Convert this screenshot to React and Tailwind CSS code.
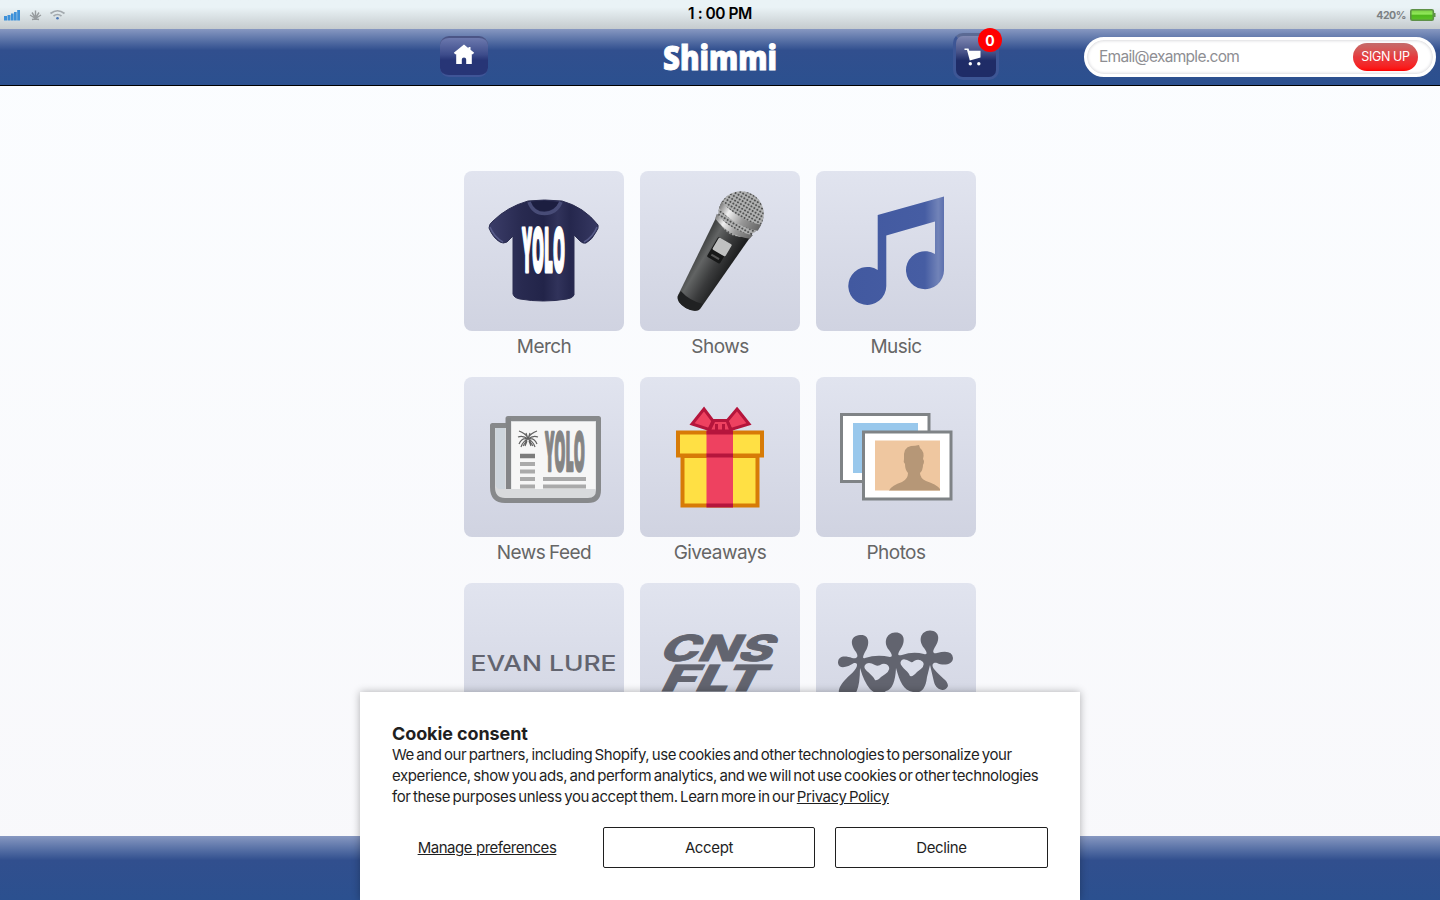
import React from "react";

const Shirt = () => (
  <svg viewBox="0 0 160 160" className="size-full">
    <defs>
      <linearGradient id="cloth" x1="0" x2="1">
        <stop offset="0" stopColor="#3b3d69" />
        <stop offset="0.3" stopColor="#282a50" />
        <stop offset="0.5" stopColor="#222449" />
        <stop offset="0.63" stopColor="#31335b" />
        <stop offset="0.74" stopColor="#25274d" />
        <stop offset="1" stopColor="#363862" />
      </linearGradient>
    </defs>
    <path
      d="M64 30Q80 28 98 30Q120 36 134 54Q135 57 132 61Q128 69 122 72Q119 73 116 70L110 64L110 124Q109 127 103 128Q79 132 56 128Q50 127 49 123L49 65L43 71Q39 73 36 71Q29 67 25 57Q25 53 29 50Q43 36 64 30Z"
      fill="url(#cloth)"
      stroke="#2b2d50"
      strokeWidth="1"
    />
    <path d="M26 56Q30 66 39 71M133 56Q129 66 120 71" stroke="#575b88" strokeWidth="1.6" fill="none" />
    <path d="M67 31Q81 29 95 31Q91 40 80 40Q71 40 67 31Z" fill="#1c1e40" />
    <path d="M65 31Q69 42.500 80.500 42.500Q92 42.500 97 31" stroke="#484c77" strokeWidth="3.500" fill="none" />
    <g transform="translate(58 100.500) scale(1 2.800)">
      <text
        textLength="43"
        lengthAdjust="spacingAndGlyphs"
        fontSize="22"
        className="fill-white stroke-white font-['Open_Sans'] font-extrabold [vector-effect:non-scaling-stroke]"
        strokeWidth="2.200"
        strokeLinejoin="round"
      >
        YOLO
      </text>
    </g>
  </svg>
);

const Mic = () => (
  <svg viewBox="0 0 160 160" className="size-full">
    <defs>
      <linearGradient id="handle" x1="0" x2="1">
        <stop offset="0" stopColor="#3a3c3c" />
        <stop offset="0.25" stopColor="#626464" />
        <stop offset="0.6" stopColor="#3a3b3c" />
        <stop offset="1" stopColor="#191a1b" />
      </linearGradient>
      <linearGradient id="chrome" x1="0" x2="1">
        <stop offset="0" stopColor="#777" />
        <stop offset="0.25" stopColor="#f0f0f0" />
        <stop offset="0.6" stopColor="#999" />
        <stop offset="1" stopColor="#666" />
      </linearGradient>
      <pattern id="mesh" width="3.4" height="3.4" patternUnits="userSpaceOnUse">
        <rect width="3.4" height="3.4" fill="#b4b5b5" />
        <circle cx="1.7" cy="1.7" r="1.1" fill="#515252" />
      </pattern>
    </defs>
    <g transform="translate(101 43) rotate(30.500)">
      <path d="M-20 12L20 12L13 102Q12 108 0 109Q-12 108 -13 102Z" fill="url(#handle)" />
      <path d="M-12.800 97Q0 101 12.800 97L12.500 104Q8 109 0 109Q-11 109 -12.800 103Z" fill="#202122" />
      <circle r="22.800" fill="url(#mesh)" />
      <path d="M-23 -1Q0 7 23 -1L23 6Q0 14 -22 6Z" fill="url(#chrome)" />
      <path d="M-21 12Q0 20 21 12L20 17Q0 25 -20 17Z" fill="url(#chrome)" />
      <rect x="-8" y="31" width="15" height="23" rx="1.500" fill="#171818" />
      <rect x="-7" y="31" width="15" height="14" rx="1.500" fill="#c0c1c1" />
      <path d="M-5 50H4" stroke="#555" strokeWidth="2" />
    </g>
  </svg>
);

const Note = () => (
  <svg viewBox="0 0 160 160" className="size-full">
    <defs>
      <linearGradient id="note" x1="0" x2="1">
        <stop offset="0" stopColor="#4259a0" />
        <stop offset="0.8" stopColor="#465da3" />
        <stop offset="0.94" stopColor="#7183b8" />
        <stop offset="1" stopColor="#5d70ae" />
      </linearGradient>
    </defs>
    <path
      d="M61.700 44L128 25.500V99A19 19 0 1 1 119 83V50.500L70.300 64.500V115A19 19 0 1 1 61.700 99Z"
      fill="url(#note)"
    />
  </svg>
);

const Newspaper = () => (
  <svg viewBox="0 0 160 160" className="size-full">
    <path
      d="M44 41.500H134.500V113Q134.500 123.500 124 123.500H41Q28.500 123.500 28.500 110V48.500H44Z"
      fill="#d8dadc"
      stroke="#87898b"
      strokeWidth="5"
      strokeLinejoin="round"
    />
    <path d="M31.500 51H41V112H36Q31.500 112 31.500 106Z" fill="#cdd5dc" />
    <path d="M44.500 41V112" stroke="#838587" strokeWidth="5" />
    <rect x="47.500" y="45" width="84" height="67" fill="#f6f6f6" />
    <path
      d="M64 61Q61 56 55 54M64 62Q59 58 54 60M64 62Q58 60 55 67M64 62Q59 64 57 70M64 61Q67 56 73 54M64 62Q69 58 74 60M64 62Q70 60 73 67M64 62Q69 64 71 70M64 62L62 56M64 62L66 56M63 63L59 69M65 63L69 69M63 64L61 69M65 64L67 69"
      fill="none"
      stroke="#606060"
      strokeWidth="1.200"
    />
    <path d="M56 79H71" stroke="#7b7b7b" strokeWidth="4.500" />
    <path
      d="M56 87H71M56 94.500H71M56 102H71M56 109.500H71M79 102H122M79 109.500H122"
      stroke="#aaaaaa"
      strokeWidth="3.800"
    />
    <g transform="translate(81 93.500) scale(1 2.480)">
      <text
        textLength="40"
        lengthAdjust="spacingAndGlyphs"
        fontSize="22"
        fill="#858585"
        stroke="#858585"
        strokeWidth="1.800"
        strokeLinejoin="round"
        className="font-['Open_Sans'] font-extrabold [vector-effect:non-scaling-stroke]"
      >
        YOLO
      </text>
    </g>
  </svg>
);

const Gift = () => (
  <svg viewBox="0 0 160 160" className="size-full">
    <g fill="#ffe044" stroke="#d77b07" strokeWidth="4">
      <path d="M42.500 79H117.500V128.500H42.500Z" />
      <path d="M38 55.500H122V78.500H38Z" />
    </g>
    <path d="M66.500 54H93V130H66.500Z" fill="#ee4160" />
    <path d="M66.500 55.500H93M66.500 78.500H93M66.500 128.500H93" stroke="#b5153c" strokeWidth="4" />
    <g fill="#ee4160" stroke="#b5153c" strokeWidth="3" strokeLinejoin="miter">
      <path d="M64 32L52 47L69 52.500L73 44Z" />
      <path d="M97 32L109 47L91 52.500L87 44Z" />
      <path d="M74 43.500H87L91 54H69Z" />
      <path d="M76.500 47V54M83.500 47V54" />
    </g>
  </svg>
);

const Pictures = () => (
  <svg viewBox="0 0 160 160" className="size-full">
    <g fill="#fff" stroke="#7f8386" strokeWidth="3">
      <path d="M25.500 37.500H113V104.500H25.500Z" />
      <path d="M37 46H102V96H37Z" fill="#99c8ec" stroke="none" />
      <path d="M47.500 55H135V122H47.500Z" />
    </g>
    <path d="M59 63.500H124V113.500H59Z" fill="#efc7a0" />
    <path
      d="M73 113.500Q76 108 86 105Q92 102 92 96Q89 93 89 87Q87 85 88 82Q87 70 95 69Q99 69 103 68L104 71Q109 75 107 82Q109 84 107 88Q107 93 104 96Q104 101 110 104Q120 107 124 112V113.500Z"
      fill="#b69777"
    />
  </svg>
);

const EvanLure = () => (
  <svg viewBox="0 0 160 160" className="size-full">
    <text
      x="6.500"
      y="88"
      textLength="146"
      lengthAdjust="spacingAndGlyphs"
      fontSize="21.500"
      fill="#62646f"
      className="font-['Inter'] font-medium"
    >
      EVAN LURE
    </text>
  </svg>
);

const CnsFlt = () => (
  <svg viewBox="0 0 160 160" className="size-full">
    <g
      fill="#62646f"
      stroke="#62646f"
      strokeWidth="0.800"
      fontSize="36"
      className="font-['Inter'] font-extrabold"
    >
      <text transform="translate(17.500 77.500) skewX(-27)" textLength="112" lengthAdjust="spacingAndGlyphs">
        CNS
      </text>
      <text transform="translate(19 108) skewX(-27)" textLength="102" lengthAdjust="spacingAndGlyphs">
        FLT
      </text>
    </g>
  </svg>
);

const People = () => (
  <svg viewBox="0 0 160 160" className="size-full">
    <g fill="#62646f">
      <path d="M44 52C54 51 54 62 49 69C47 73 46 76 49 75Q61 71 74 74C77 74 76 71 73 67C67 60 70 50 79 49.500C89 49 90 59 84 67C81 72 82 73 86 72Q97 68 108 71C112 72 111 69 108 65C102 58 104 48 114 47.500C124 48 124 57 119 64C116 69 117 71 121 70Q136 66 137 75C137 82 127 83 121 80C117 79 115 82 118 86C125 95 132 97 132 103C129 110 120 107 118 99L114 82L111 94Q109 112 97 109C87 107 84 99 80 85Q79 106 70 108Q63 115 54 106Q48 99 44 85Q44 118 29 116C18 111 23 102 34 92C42 85 43 79 38 80C32 84 23 87 22 80C22 72 30 73 36 75C41 76 43 74 40 69C34 61 34 53 44 52Z" />
    </g>
    <path
      d="M59 82Q52 78 49 82C46 87 56 90 59 97Q61 98 65 94Q75 88 73 84Q71 80 66 81Q62 84 59 82ZM95 79Q87 74 85 78C82 83 92 87 94 93Q97 94 101 89Q110 83 107 79Q103 75 98 78Q96 80 95 79Z"
      fill="#dadde9"
    />
  </svg>
);

const apps = [
  { label: "Merch", icon: <Shirt /> },
  { label: "Shows", icon: <Mic /> },
  { label: "Music", icon: <Note /> },
  { label: "News Feed", icon: <Newspaper /> },
  { label: "Giveaways", icon: <Gift /> },
  { label: "Photos", icon: <Pictures /> },
  { label: "Evan Lure", icon: <EvanLure />, hideLabel: true },
  { label: "CNS FLT", icon: <CnsFlt />, hideLabel: true },
  { label: "Friends", icon: <People />, hideLabel: true },
];

const StatusBar = () => (
  <div className="grid h-[29px] grid-cols-3 items-center bg-linear-to-b from-[#eaf3f6] from-25% to-[#c5cbce]">
    <svg width="68" height="29" viewBox="0 0 68 29">
      <g fill="#3e91d9">
        <path d="M4 16h3v4.500h-3zM7.500 15h3v5.500h-3zM11 13.500h2.600v7h-2.600zM14 12h2.700v8.500h-2.700zM17.200 10h2.800v10.500h-2.800z" />
      </g>
      <path
        d="M35.500 20V10.500M35.500 18L32 12.500M35.500 18L39 12.500M35.500 18.500L30 15M35.500 18.500L41 15M35.500 19L32 19.500M35.500 19L39 19.500"
        stroke="#969b9e"
        strokeWidth="1.400"
      />
      <g fill="none" stroke="#a3a9ae" strokeWidth="1.700">
        <path d="M50.500 13.500Q57.500 8 64.500 13.500M53.500 16Q57.500 13 61.500 16" />
        <circle cx="57.500" cy="18.300" r="1.300" fill="#4c78b8" stroke="none" />
      </g>
    </svg>
    <p className="pb-[2px] text-center text-[15.5px] leading-none font-semibold tracking-[-0.03em] text-black">
      1 : 00 PM
    </p>
    <div className="flex items-center justify-end gap-1 pt-px pr-[3px]">
      <span className="pt-px text-[10.5px] font-bold tracking-[-0.04em] text-[#7b8083]">420%</span>
      <svg width="27" height="12" viewBox="0 0 27 12">
        <defs>
          <linearGradient id="charge" x1="0" x2="0" y1="0" y2="1">
            <stop offset="0" stopColor="#78cf40" />
            <stop offset="0.4" stopColor="#91e85a" />
            <stop offset="0.55" stopColor="#4fb81c" />
            <stop offset="1" stopColor="#5cc32a" />
          </linearGradient>
        </defs>
        <rect x="0.800" y="0.800" width="22.500" height="10.400" rx="1.500" fill="url(#charge)" stroke="#5e9147" strokeWidth="1.600" />
        <path d="M24 4h1.500v4h-1.500z" fill="#5e9147" />
      </svg>
    </div>
  </div>
);

const Header = () => (
  <header className="flex h-[57px] border-b border-black bg-linear-to-b from-[#8798c1] via-[#314f8e] via-38% to-[#2b508f]">
    <div className="w-[440px] shrink-0" />
    <div className="flex w-[560px] shrink-0 justify-between">
      <button className="mt-[7px] flex h-[41px] w-12 items-center justify-center rounded-[9px] border-t-2 border-b-2 border-t-[#4b5586] border-b-[#3f5597] bg-linear-to-b from-[#6d79ae] via-[#3d4c8b] via-45% to-[#273576] to-60%">
        <svg width="22" height="22" viewBox="0 0 22 22" fill="#fff" className="-mt-[5px]">
          <path d="M11 1.500L0.800 9.800L2.200 11.300H3.200V21H8.800V16.500Q8.800 14.500 11 14.500Q13.200 14.500 13.200 16.500V21H18.800V11.300H19.800L21.200 9.800L17.500 6.800V4H15.500V5.200Z" />
        </svg>
      </button>
      <h1 className="flex">
        <svg width="126" height="56" viewBox="0 0 126 56" className="overflow-visible">
          <text
            x="5"
            y="41"
            textLength="114"
            lengthAdjust="spacingAndGlyphs"
            fontSize="34"
            fill="#fff"
            stroke="#fff"
            strokeWidth="0.900"
            className="font-['Open_Sans'] font-extrabold"
          >
            Shimmi
          </text>
        </svg>
      </h1>
      <div className="relative mt-[4px] mr-px flex h-[47px] w-[46px] items-center justify-center rounded-[10px] border-[3px] border-[#3d5695] border-t-[#5b6a94] bg-linear-to-b from-[#8088b2] via-[#465187] via-40% to-[#1f2c67] to-60%">
        <svg width="17" height="18" viewBox="0 0 17 18" fill="#fff" className="-ml-2">
          <path d="M0.500 0.500H4.500L5.300 2.800H16.500V9.500L5.800 12.500L3 2H0.500Z" />
          <circle cx="6.300" cy="15.800" r="1.700" />
          <circle cx="14.800" cy="15.800" r="1.700" />
        </svg>
        <span className="absolute -top-2 -right-[6px] flex size-6 items-center justify-center rounded-full bg-[#ff0000] text-[14px] font-bold text-white">
          0
        </span>
      </div>
    </div>
    <form className="mt-2 ml-[84px] flex h-10 w-[352px] items-center justify-between rounded-full border-[3px] border-white bg-white pr-[15px] pl-3 shadow-[inset_0_0_3px_1px_#dcdcdf]">
      <input
        type="email"
        placeholder="Email@example.com"
        className="w-[220px] pb-px text-[15.5px] tracking-[-0.045em] outline-none placeholder:text-[#8e8e93]"
      />
      <button className="h-7 w-[65px] rounded-full bg-linear-to-b from-[#c46b6b] via-[#e53a3e] via-50% to-[#ff0000] pt-px text-[12.5px] tracking-[-0.03em] text-white">
        SIGN UP
      </button>
    </form>
  </header>
);

const CookieConsent = () => (
  <div
    role="dialog"
    className="absolute bottom-0 left-1/2 h-[208px] w-[720px] -translate-x-1/2 bg-white px-8 pt-8 text-[15px] text-[#1f1f1f] shadow-[0_0_8px_rgba(0,0,0,0.3)]"
  >
    <h2 className="text-[18px] leading-[20px] font-bold tracking-[-0.1px]">Cookie consent</h2>
    <p className="leading-[21px] tracking-[-0.41px] whitespace-nowrap [word-spacing:-1.4px]">
      We and our partners, including Shopify, use cookies and other technologies to personalize your
      <br />
      experience, show you ads, and perform analytics, and we will not use cookies or other technologies
      <br />
      for these purposes unless you accept them. Learn more in our <a className="underline">Privacy Policy</a>
    </p>
    <div className="mt-5 flex h-[41px] tracking-[-0.35px] [word-spacing:-2px]">
      <button className="mr-[21px] w-[190px] pt-[2px] text-center tracking-[-0.45px] underline">Manage preferences</button>
      <button className="mr-5 w-[212px] rounded-[2px] border border-[#1f1f1f] pt-[2px]">Accept</button>
      <button className="w-[213px] rounded-[2px] border border-[#1f1f1f] pt-[2px]">Decline</button>
    </div>
  </div>
);

export default function App() {
  return (
    <div className="relative flex h-screen flex-col overflow-hidden bg-linear-to-b from-[#fbfdff] to-[#f8f8fb] font-['Inter',sans-serif]">
      <StatusBar />
      <Header />
      <main className="min-h-0 flex-1 overflow-hidden pt-[85px]">
        <div className="mx-auto grid w-[512px] grid-cols-3 gap-x-4">
          {apps.map((app) => (
            <a key={app.label} aria-label={app.label} className="block h-[206px]">
              <div className="size-40 overflow-hidden rounded-lg bg-linear-to-b from-[#e1e4ef] to-[#d0d3e1]">
                {app.icon}
              </div>
              {!app.hideLabel && (
                <p className="pt-[2px] text-center text-[19px] leading-[28px] tracking-[-0.55px] text-[#666] [word-spacing:-1px]">
                  {app.label}
                </p>
              )}
            </a>
          ))}
        </div>
      </main>
      <footer className="h-16 shrink-0 bg-linear-to-b from-[#8798c1] via-[#314f8e] via-38% to-[#2b508f]" />
      <CookieConsent />
    </div>
  );
}
